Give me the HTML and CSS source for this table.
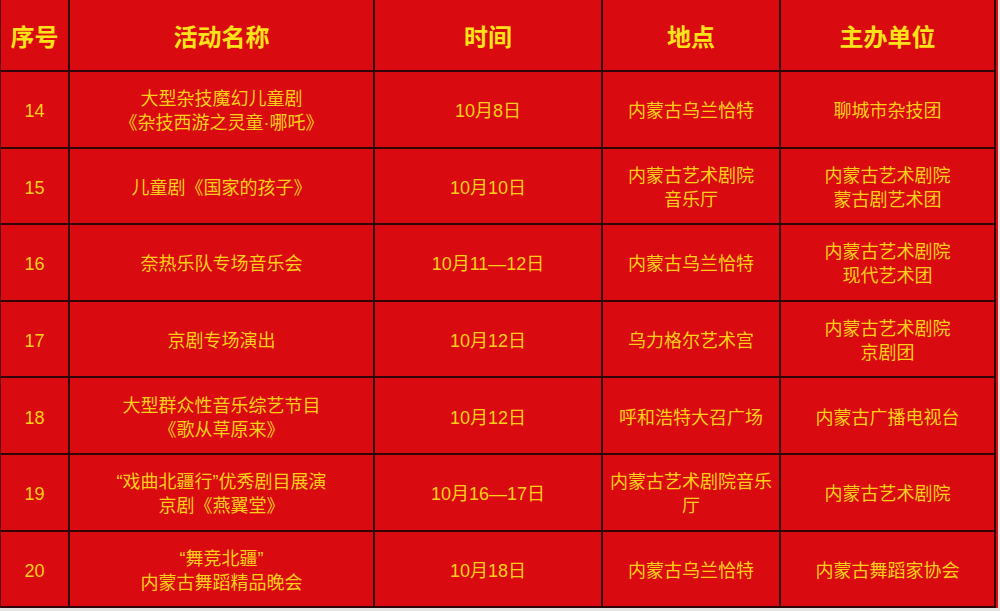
FILE: index.html
```html
<!DOCTYPE html>
<html lang="zh-CN">
<head>
<meta charset="utf-8">
<title>活动安排</title>
<link rel="stylesheet" href="styles.css">
</head>
<body>
<div class="sheet">
  <div class="grid">
    <div class="cell head">序号</div>
    <div class="cell head">活动名称</div>
    <div class="cell head">时间</div>
    <div class="cell head">地点</div>
    <div class="cell head last">主办单位</div>

    <div class="cell num">14</div>
    <div class="cell">大型杂技魔幻儿童剧<br>《杂技西游之灵童·哪吒》</div>
    <div class="cell">10月8日</div>
    <div class="cell">内蒙古乌兰恰特</div>
    <div class="cell last">聊城市杂技团</div>

    <div class="cell num">15</div>
    <div class="cell">儿童剧《国家的孩子》</div>
    <div class="cell">10月10日</div>
    <div class="cell">内蒙古艺术剧院<br>音乐厅</div>
    <div class="cell last">内蒙古艺术剧院<br>蒙古剧艺术团</div>

    <div class="cell num">16</div>
    <div class="cell">奈热乐队专场音乐会</div>
    <div class="cell">10月11—12日</div>
    <div class="cell">内蒙古乌兰恰特</div>
    <div class="cell last">内蒙古艺术剧院<br>现代艺术团</div>

    <div class="cell num">17</div>
    <div class="cell">京剧专场演出</div>
    <div class="cell">10月12日</div>
    <div class="cell">乌力格尔艺术宫</div>
    <div class="cell last">内蒙古艺术剧院<br>京剧团</div>

    <div class="cell num">18</div>
    <div class="cell">大型群众性音乐综艺节目<br>《歌从草原来》</div>
    <div class="cell">10月12日</div>
    <div class="cell">呼和浩特大召广场</div>
    <div class="cell last">内蒙古广播电视台</div>

    <div class="cell num">19</div>
    <div class="cell">“戏曲北疆行”优秀剧目展演<br>京剧《燕翼堂》</div>
    <div class="cell">10月16—17日</div>
    <div class="cell">内蒙古艺术剧院音乐厅</div>
    <div class="cell last">内蒙古艺术剧院</div>

    <div class="cell num">20</div>
    <div class="cell">“舞竞北疆”<br>内蒙古舞蹈精品晚会</div>
    <div class="cell">10月18日</div>
    <div class="cell">内蒙古乌兰恰特</div>
    <div class="cell last">内蒙古舞蹈家协会</div>
  </div>
</div>
</body>
</html>
```

FILE: styles.css
```css
html, body {
  margin: 0;
  padding: 0;
}

body {
  background: #e6e3e3;
  width: 1000px;
  height: 611px;
  overflow: hidden;
}

.sheet {
  width: 998px;
  height: 608px;
  background: #d90a10;
}

.grid {
  display: grid;
  grid-template-columns: 69px 305px 228px 178px 215px;
  grid-template-rows: 72px repeat(7, 76.6px);
  width: 996px;
  border-left: 1px solid #5a0808;
  box-sizing: border-box;
}

.cell {
  box-sizing: border-box;
  border-right: 2px solid #2e0404;
  border-bottom: 2px solid #2e0404;
  display: flex;
  align-items: center;
  justify-content: center;
  text-align: center;
  padding: 4px 3px 0;
  color: #ffcf1a;
  font-family: "Liberation Sans", "Noto Sans CJK SC", sans-serif;
  font-size: 18px;
  line-height: 24px;
}

.head {
  color: #ffe21a;
  font-family: "Noto Sans CJK SC", sans-serif;
  font-weight: 700;
  font-size: 24px;
  padding: 2px 0 0;
}

.num {
  font-size: 18px;
}
```
